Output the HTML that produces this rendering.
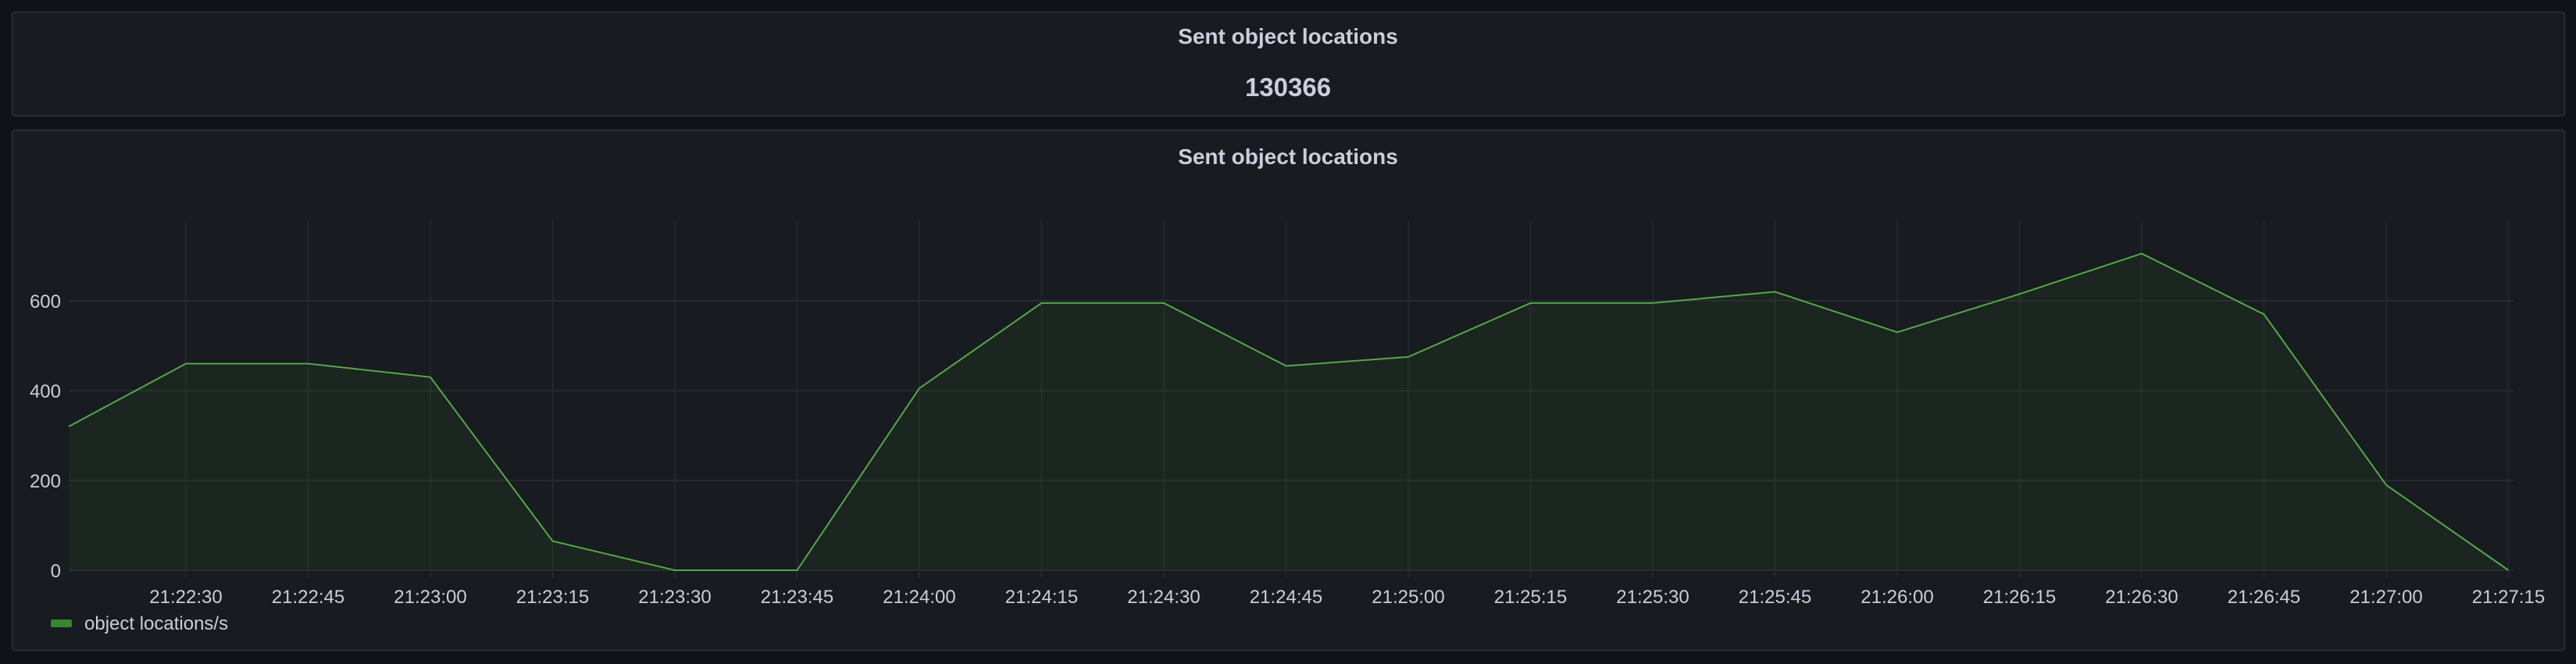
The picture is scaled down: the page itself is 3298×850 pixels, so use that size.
<!DOCTYPE html>
<html><head><style>
html,body{margin:0;padding:0;background:#111217;width:3298px;height:850px;overflow:hidden}
svg{display:block}
text{font-family:"Liberation Sans",sans-serif;fill:#ccccdc}
</style></head><body>
<svg width="3298" height="850" viewBox="0 0 3298 850">
<rect x="15.5" y="15.5" width="3268" height="133" rx="4" fill="#181b1f" stroke="#2a2c31" stroke-width="2"/>
<rect x="15.5" y="166.5" width="3268" height="666" rx="4" fill="#181b1f" stroke="#2a2c31" stroke-width="2"/>
<text x="1649" y="56" font-size="28" font-weight="bold" text-anchor="middle">Sent object locations</text>
<text x="1649" y="123" font-size="33" font-weight="bold" text-anchor="middle">130366</text>
<text x="1649" y="210" font-size="28" font-weight="bold" text-anchor="middle">Sent object locations</text>
<g stroke="#2b2e33" stroke-width="1.5">
<line x1="88" y1="385" x2="3218" y2="385"/>
<line x1="88" y1="500" x2="3218" y2="500"/>
<line x1="88" y1="615" x2="3218" y2="615"/>
<line x1="88" y1="730" x2="3218" y2="730"/>
</g>
<g stroke="#26292e" stroke-width="1.5" id="vg"></g>
<g font-size="24" text-anchor="end">
<text x="78" y="394">600</text><text x="78" y="509">400</text><text x="78" y="624">200</text><text x="78" y="739">0</text>
</g>
<g id="xl" font-size="24" text-anchor="middle"></g>
<polygon id="area" fill="#37872d" fill-opacity="0.1" points=""/>
<polyline id="ln" fill="none" stroke="#56a64b" stroke-width="2" points=""/>
<rect x="65" y="793" width="27" height="10" rx="2" fill="#37872d"/>
<text x="108" y="806" font-size="24">object locations/s</text>
</svg>
<script>
var labels=["21:22:30","21:22:45","21:23:00","21:23:15","21:23:30","21:23:45","21:24:00","21:24:15","21:24:30","21:24:45","21:25:00","21:25:15","21:25:30","21:25:45","21:26:00","21:26:15","21:26:30","21:26:45","21:27:00","21:27:15"];
var ns="http://www.w3.org/2000/svg",vg=document.getElementById("vg"),xl=document.getElementById("xl");
labels.forEach(function(l,k){var x=238+156.5*k;
var ln=document.createElementNS(ns,"line");ln.setAttribute("x1",x);ln.setAttribute("x2",x);ln.setAttribute("y1",282);ln.setAttribute("y2",740);vg.appendChild(ln);
var t=document.createElementNS(ns,"text");t.setAttribute("x",x);t.setAttribute("y",772);t.textContent=l;xl.appendChild(t);});
var v=[320,460,460,430,65,0,0,405,595,595,455,475,595,595,620,530,615,705,570,190,0];
var pts=v.map(function(val,i){var x=i==0?88:238+156.5*(i-1);return x+","+(730-val*0.575).toFixed(1);});
document.getElementById("ln").setAttribute("points",pts.join(" "));
document.getElementById("area").setAttribute("points","88,730 "+pts.join(" ")+" "+(238+156.5*19)+",730");
</script>
</body></html>
